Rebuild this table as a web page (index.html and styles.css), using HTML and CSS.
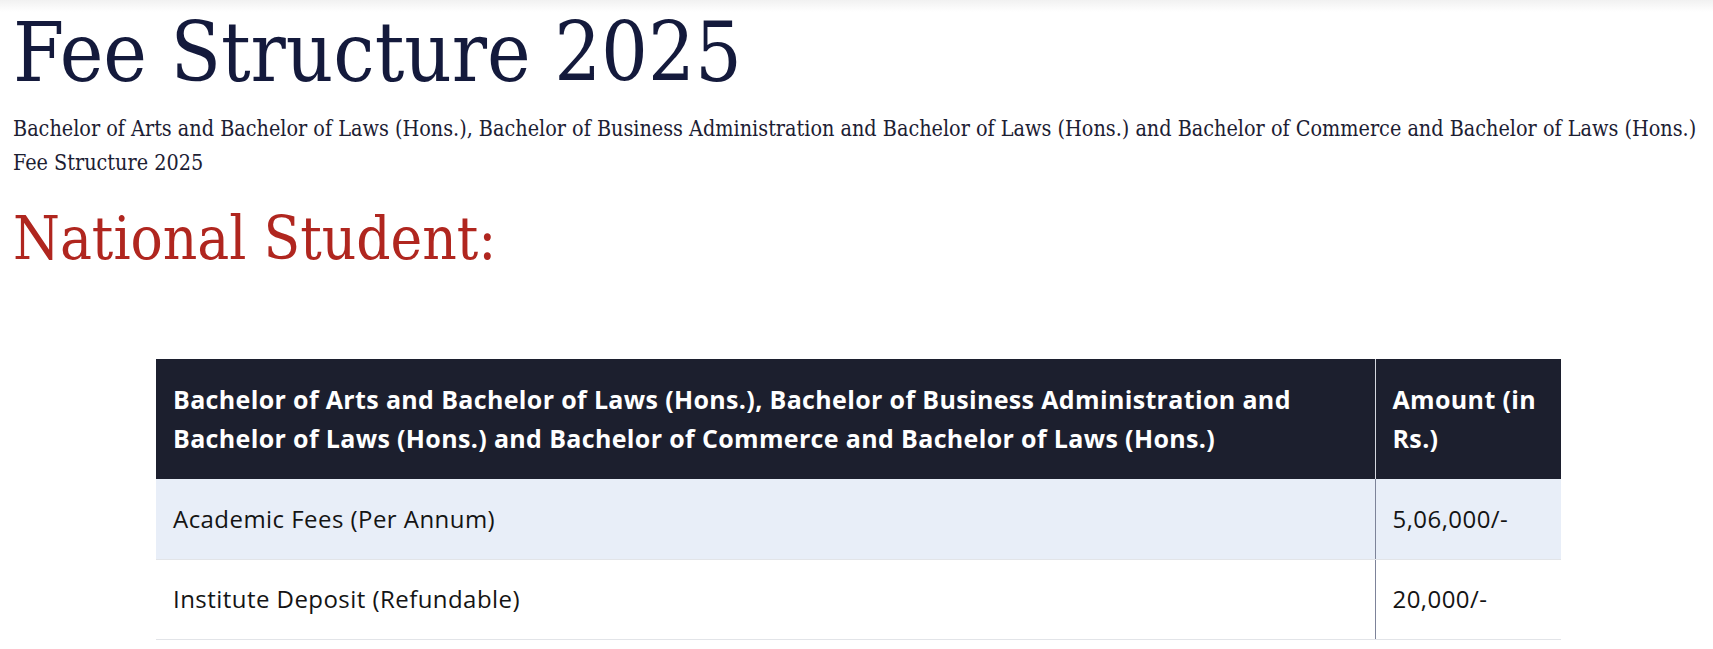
FILE: index.html
```html
<!DOCTYPE html>
<html lang="en">
<head>
<meta charset="utf-8">
<title>Fee Structure 2025</title>
<link rel="stylesheet" href="styles.css">
</head>
<body>
<div class="topbar"></div>
<main class="page">
  <h1 class="title">Fee Structure 2025</h1>
  <p class="intro">Bachelor of Arts and Bachelor of Laws (Hons.), Bachelor of Business Administration and Bachelor of Laws (Hons.) and Bachelor of Commerce and Bachelor of Laws (Hons.) Fee Structure 2025</p>
  <h2 class="section">National Student:</h2>
  <table class="fees">
    <thead>
      <tr>
        <th class="col-name">Bachelor of Arts and Bachelor of Laws (Hons.), Bachelor of Business Administration and Bachelor of Laws (Hons.) and Bachelor of Commerce and Bachelor of Laws (Hons.)</th>
        <th class="col-amt">Amount (in Rs.)</th>
      </tr>
    </thead>
    <tbody>
      <tr class="alt">
        <td class="col-name">Academic Fees (Per Annum)</td>
        <td class="col-amt">5,06,000/-</td>
      </tr>
      <tr>
        <td class="col-name">Institute Deposit (Refundable)</td>
        <td class="col-amt">20,000/-</td>
      </tr>
    </tbody>
  </table>
</main>
</body>
</html>
```
FILE: styles.css
```css
html, body {
  margin: 0;
  padding: 0;
  background: #ffffff;
}
body {
  height: 649px;
  overflow: hidden;
  position: relative;
}
.topbar {
  position: absolute;
  top: 0;
  left: 0;
  right: 0;
  height: 12px;
  background: linear-gradient(#f1f1f1, rgba(255,255,255,0));
}
.page {
  padding: 9px 0 0 13px;
}
.title {
  margin: 0;
  font-family: "DejaVu Serif Condensed", "Liberation Serif", serif;
  font-weight: 400;
  font-size: 82px;
  line-height: 88px;
  color: #141a3c;
}
.intro {
  margin: 15px 0 0 0;
  max-width: 1695px;
  font-family: "DejaVu Serif Condensed", "Liberation Serif", serif;
  font-size: 21.4px;
  line-height: 34px;
  color: #1c2033;
}
.section {
  margin: 24px 0 0 0;
  font-family: "DejaVu Serif Condensed", "Liberation Serif", serif;
  font-weight: 400;
  font-size: 59.6px;
  line-height: 70px;
  color: #b0261f;
}
.fees {
  margin: 85px 0 0 143px;
  width: 1405px;
  border-collapse: collapse;
  table-layout: fixed;
  font-family: "Open Sans", sans-serif;
}
.fees th, .fees td {
  box-sizing: border-box;
  text-align: left;
  vertical-align: middle;
  padding: 0 17px;
}
.fees .col-name { width: 1219px; }
.fees .col-amt { width: 186px; }
.fees th {
  background: #1c1f2e;
  color: #ffffff;
  font-weight: 700;
  font-size: 25px;
  letter-spacing: 0.35px;
  line-height: 39px;
  height: 120px;
}
.fees th.col-name { border-right: 1px solid #d4d6de; }
.fees td {
  font-size: 24px;
  letter-spacing: 0.45px;
  line-height: 24px;
  height: 80px;
  color: #141414;
  border-bottom: 1px solid #e2e4e8;
}
.fees td.col-name { border-right: 1px solid #7d8399; }
.fees tr.alt td { background: #e8eef8; }
```
